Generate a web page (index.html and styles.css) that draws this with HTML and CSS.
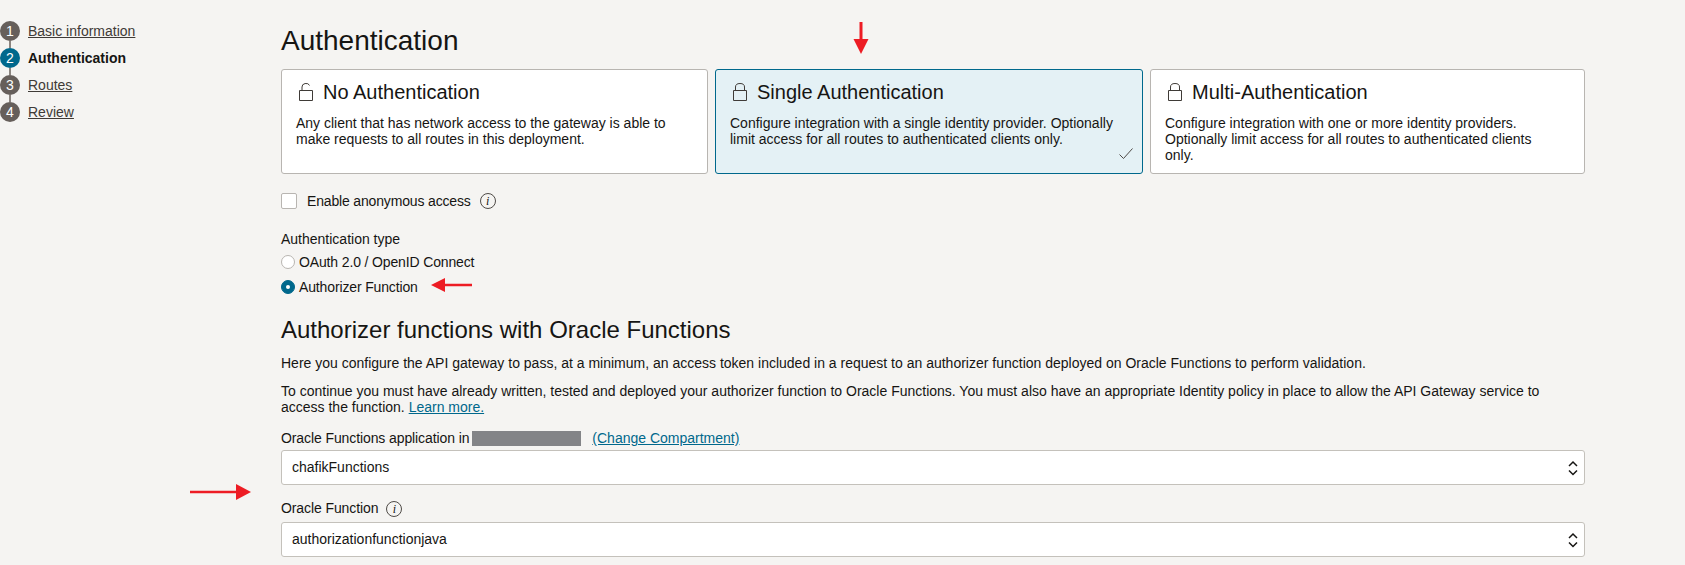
FILE: index.html
```html
<!DOCTYPE html>
<html lang="en">
<head>
<meta charset="utf-8">
<title>Authentication</title>
<link rel="stylesheet" href="styles.css">
</head>
<body>
<div class="page">
  <nav class="steps">
    <div class="step"><span class="num">1</span><a class="step-link" href="#">Basic information</a></div>
    <div class="step active"><span class="num">2</span><b class="step-current">Authentication</b></div>
    <div class="step"><span class="num">3</span><a class="step-link" href="#">Routes</a></div>
    <div class="step"><span class="num">4</span><a class="step-link" href="#">Review</a></div>
  </nav>
  <main class="main">
    <h1 class="title">Authentication</h1>
    <div class="cards">
      <section class="card">
        <h3 class="card-title">
          <svg class="lock" viewBox="0 0 16 18"><path d="M1.5 7.5h13v10h-13z M4 7.500V4a4 3.500 0 0 1 7.600-1.600" fill="none" stroke="#3f3b37" stroke-width="1"/></svg>
          No Authentication</h3>
        <p class="card-text">Any client that has network access to the gateway is able to make requests to all routes in this deployment.</p>
      </section>
      <section class="card selected">
        <h3 class="card-title">
          <svg class="lock" viewBox="0 0 16 18"><path d="M1.5 7.5h13v10h-13z M3.500 7.500V4a4.500 3.500 0 0 1 9 0v3.500" fill="none" stroke="#3f3b37" stroke-width="1"/></svg>
          Single Authentication</h3>
        <p class="card-text">Configure integration with a single identity provider. Optionally limit access for all routes to authenticated clients only.</p>
        <svg class="check" viewBox="0 0 14 11"><path d="M0.500 6.500l4 4L13.500 0.500" fill="none" stroke="#4f4b47" stroke-width="1"/></svg>
      </section>
      <section class="card">
        <h3 class="card-title">
          <svg class="lock" viewBox="0 0 16 18"><path d="M1.5 7.5h13v10h-13z M3.500 7.500V4a4.500 3.500 0 0 1 9 0v3.500" fill="none" stroke="#3f3b37" stroke-width="1"/></svg>
          Multi-Authentication</h3>
        <p class="card-text narrow">Configure integration with one or more identity providers. Optionally limit access for all routes to authenticated clients only.</p>
      </section>
    </div>

    <div class="anon">
      <span class="checkbox"></span>
      <span class="anon-label">Enable anonymous access</span>
      <span class="info">i</span>
    </div>

    <div class="type-label">Authentication type</div>
    <div class="radio-row first"><span class="radio"></span><span class="radio-text">OAuth 2.0 / OpenID Connect</span></div>
    <div class="radio-row"><span class="radio on"></span><span class="radio-text">Authorizer Function</span></div>

    <h2 class="subtitle">Authorizer functions with Oracle Functions</h2>
    <p class="para p1">Here you configure the API gateway to pass, at a minimum, an access token included in a request to an authorizer function deployed on Oracle Functions to perform validation.</p>
    <p class="para p2">To continue you must have already written, tested and deployed your authorizer function to Oracle Functions. You must also have an appropriate Identity policy in place to allow the API Gateway service to access the function. <a class="link" href="#">Learn more.</a></p>

    <div class="field-label l1"><span class="tight">Oracle Functions application in</span><span class="redacted"></span><a class="link change" href="#">(Change Compartment)</a></div>
    <div class="select"><span class="select-text">chafikFunctions</span>
      <svg class="updown" viewBox="0 0 10 16"><path d="M1 6l4-4 4 4M1 10.500l4 4 4-4" fill="none" stroke="#161513" stroke-width="1.500"/></svg>
    </div>
    <div class="field-label l2"><span class="tight">Oracle Function</span><span class="info small">i</span></div>
    <div class="select"><span class="select-text">authorizationfunctionjava</span>
      <svg class="updown" viewBox="0 0 10 16"><path d="M1 6l4-4 4 4M1 10.500l4 4 4-4" fill="none" stroke="#161513" stroke-width="1.500"/></svg>
    </div>
  </main>
</div>

<svg class="arrow arrow-top" viewBox="0 0 16 32"><path d="M8 0v18" stroke="#ed1c24" stroke-width="3"/><path d="M0.500 17h15L8 32z" fill="#ed1c24"/></svg>
<svg class="arrow arrow-mid" viewBox="0 0 41 14"><path d="M12 7h29" stroke="#ed1c24" stroke-width="2.500"/><path d="M14 0v14L0 7z" fill="#ed1c24"/></svg>
<svg class="arrow arrow-low" viewBox="0 0 61 16"><path d="M0 8h48" stroke="#ed1c24" stroke-width="2.500"/><path d="M46 0v16l15-8z" fill="#ed1c24"/></svg>
</body>
</html>
```
FILE: styles.css
```css
* { box-sizing: border-box; }
html, body { margin: 0; height: 565px; overflow: hidden; }
body {
  position: relative;
  background: #f5f4f2;
  color: #161513;
  font-family: "Liberation Sans", Arial, sans-serif;
  font-size: 14px;
  line-height: 16px;
}
.page { display: flex; }
.steps { width: 281px; flex: none; padding-top: 21px; display: flex; flex-direction: column; gap: 7px; }
.step { position: relative; display: flex; align-items: center; gap: 8px; height: 20px; }
.step + .step::before {
  content: ""; position: absolute; left: 9px; top: -7px; width: 2px; height: 7px; background: #8b8580;
}
.num {
  width: 20px; height: 20px; border-radius: 50%; background: #665f5b; color: #fff;
  display: flex; align-items: center; justify-content: center; font-size: 14px;
}
.active .num { background: #00688c; }
.step-link { color: #3f3b37; text-decoration: underline; }
.step-current { font-weight: 700; color: #161513; }

.main { width: 1304px; flex: none; padding-top: 25px; }
.title { margin: 0 0 12px; font-size: 28px; line-height: 32px; font-weight: 400; }
.cards { display: grid; grid-template-columns: 427px 428px 435px; gap: 7px; }
.card {
  position: relative; height: 105px; padding: 10px 14px; background: #fff;
  border: 1px solid #b8b5b1; border-radius: 3px;
}
.card.selected { background: #e4f1f5; border-color: #00688c; }
.card-title {
  margin: 0 0 11px; font-size: 20px; line-height: 24px; font-weight: 400;
  display: flex; align-items: center; gap: 9px;
}
.lock { width: 16px; height: 18px; flex: none; margin-left: 2px; }
.card-text { margin: 0; }
.card-text.narrow { padding-right: 20px; }
.check { position: absolute; right: 9px; bottom: 14px; width: 14px; height: 11px; }

.anon { display: flex; align-items: center; margin-top: 19px; height: 16px; }
.checkbox { width: 16px; height: 16px; background: #fff; border: 1px solid #b8b5b1; border-radius: 2px; }
.anon-label { margin-left: 10px; letter-spacing: -0.16px; }
.info {
  width: 16px; height: 16px; margin-left: 9px; border: 1px solid #4f4b47; border-radius: 50%;
  display: inline-flex; align-items: center; justify-content: center;
  font: italic 12px/1 "Liberation Serif", serif; color: #161513;
}
.info.small { margin-left: 8px; vertical-align: 0; }

.type-label { margin-top: 22px; }
.radio-row { display: flex; align-items: center; gap: 4px; height: 16px; margin-top: 9px; }
.radio-row.first { margin-top: 7px; }
.radio-text { letter-spacing: -0.14px; }
.radio { width: 14px; height: 14px; border-radius: 50%; background: #fff; border: 1px solid #b8b5b1; }
.radio.on { background: #00688c; border-color: #00688c; display: flex; align-items: center; justify-content: center; }
.radio.on::after { content: ""; width: 4px; height: 4px; border-radius: 50%; background: #fff; }

.subtitle { margin: 21px 0 0; font-size: 24px; line-height: 28px; font-weight: 400; }
.para { margin: 0; }
.p1 { margin-top: 11px; }
.p2 { margin-top: 12px; padding-right: 40px; }
.link { color: #00688c; text-decoration: underline; }
.field-label { height: 16px; }
.tight { letter-spacing: -0.1px; }
.l1 { margin-top: 15px; margin-bottom: 4px; }
.l2 { margin-top: 15px; margin-bottom: 6px; }
.redacted { display: inline-block; width: 109px; height: 15px; margin-left: 3px; background: #838487; vertical-align: -3px; }
.change { margin-left: 11px; }
.select {
  position: relative; height: 35px; padding: 0 10px 2px; background: #fff;
  border: 1px solid #c4c1bb; border-radius: 3px; display: flex; align-items: center;
}
.updown { position: absolute; right: 6px; top: 9px; width: 10px; height: 16px; }

.arrow { position: absolute; }
.arrow-top { left: 853px; top: 22px; width: 16px; height: 32px; }
.arrow-mid { left: 431px; top: 278px; width: 41px; height: 14px; }
.arrow-low { left: 190px; top: 484px; width: 61px; height: 16px; }
```
